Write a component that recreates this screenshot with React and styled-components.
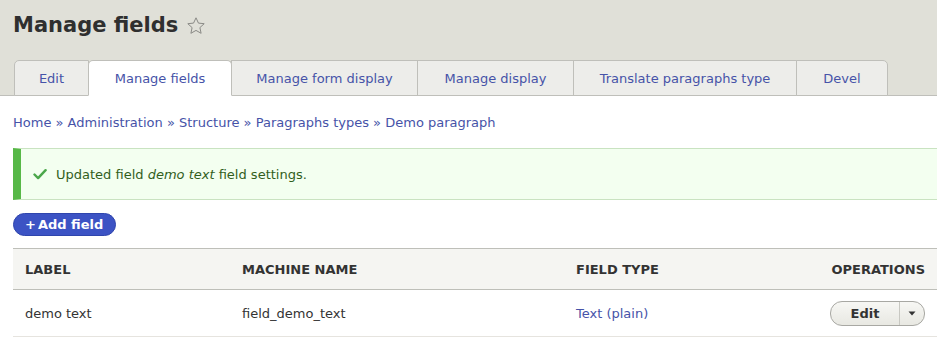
import React from "react";
import styled, { createGlobalStyle } from "styled-components";

const GlobalStyle = createGlobalStyle`
  html, body {
    margin: 0;
    padding: 0;
    background: #fff;
    font-family: "DejaVu Sans", Verdana, sans-serif;
    font-size: 13px;
    color: #333;
  }
  a { text-decoration: none; }
`;

const tabs = [
  { label: "Edit", w: 75 },
  { label: "Manage fields", w: 144 },
  { label: "Manage form display", w: 187 },
  { label: "Manage display", w: 157 },
  { label: "Translate paragraphs type", w: 224 },
  { label: "Devel", w: 92 },
];

const crumbs = [
  "Home",
  "Administration",
  "Structure",
  "Paragraphs types",
  "Demo paragraph",
];

export default function App() {
  return (
    <Page>
      <GlobalStyle />
      <Header>
        <TitleRow>
          <Title>Manage fields</Title>
          <Star viewBox="0 0 20 20">
            <path
              d="M10 1.8l2.45 5.3 5.75.6-4.3 3.9 1.2 5.7L10 14.4l-5.1 2.9 1.2-5.7-4.3-3.9 5.75-.6z"
              fill="none"
              stroke="#8a8a86"
              strokeWidth="1"
              strokeLinejoin="round"
            />
          </Star>
        </TitleRow>
        <Tabs>
          {tabs.map((t, i) => (
            <Tab
              key={t.label}
              $w={t.w}
              $active={i === 1}
              $first={i === 0}
              $last={i === tabs.length - 1}
            >
              {t.label}
            </Tab>
          ))}
        </Tabs>
      </Header>
      <Content>
        <Breadcrumb>
          {crumbs.map((c, i) => (
            <React.Fragment key={c}>
              {i > 0 && <Sep> » </Sep>}
              <Link href="#">{c}</Link>
            </React.Fragment>
          ))}
        </Breadcrumb>
        <Message>
          <Check viewBox="0 0 14 12">
            <path
              d="M1.5 6.5l3.6 3.6L12.6 2.2"
              fill="none"
              stroke="#4aa74a"
              strokeWidth="2.4"
              strokeLinecap="round"
              strokeLinejoin="round"
            />
          </Check>
          <span>
            Updated field <em>demo text</em> field settings.
          </span>
        </Message>
        <AddButton>
          <Plus>+</Plus>Add field
        </AddButton>
        <Table>
          <thead>
            <tr>
              <Th $w="193px">Label</Th>
              <Th $w="310px">Machine name</Th>
              <Th>Field type</Th>
              <Th $right>Operations</Th>
            </tr>
          </thead>
          <tbody>
            <tr>
              <Td>demo text</Td>
              <Td>field_demo_text</Td>
              <Td>
                <Link href="#">Text (plain)</Link>
              </Td>
              <Td $right>
                <DropButton>
                  <DropMain>Edit</DropMain>
                  <DropToggle>
                    <Caret viewBox="0 0 8 5">
                      <path d="M0.5 0.5h7L4 4.5z" fill="#333" />
                    </Caret>
                  </DropToggle>
                </DropButton>
              </Td>
            </tr>
          </tbody>
        </Table>
      </Content>
    </Page>
  );
}

const Page = styled.div`
  width: 937px;
  overflow: hidden;
`;

const Header = styled.header`
  background: #e0e0d8;
  padding: 0 0 0 13px;
  border-bottom: 1px solid #bfbfba;
`;

const TitleRow = styled.div`
  display: flex;
  align-items: center;
  height: 51px;
`;

const Title = styled.h1`
  margin: 0;
  font-size: 21px;
  font-weight: bold;
  color: #2f2f2f;
  line-height: 1;
`;

const Star = styled.svg`
  width: 20px;
  height: 20px;
  margin-left: 8px;
`;

const Tabs = styled.ul`
  display: flex;
  margin: 9px 0 -1px 1px;
  padding: 0;
  list-style: none;
`;

const Tab = styled.li`
  box-sizing: border-box;
  width: ${(p) => p.$w}px;
  height: 36px;
  display: flex;
  align-items: center;
  justify-content: center;
  margin-left: -1px;
  border: 1px solid #bfbfba;
  border-bottom: ${(p) => (p.$active ? "1px solid #fff" : "1px solid #bfbfba")};
  background: ${(p) => (p.$active ? "#fff" : "#ededea")};
  color: #4653a8;
  font-size: 13px;
  white-space: nowrap;
  border-radius: ${(p) =>
    p.$active ? "5px 5px 0 0" : p.$first ? "5px 0 0 0" : p.$last ? "0 5px 0 0" : "0"};
  position: relative;
  z-index: ${(p) => (p.$active ? 1 : 0)};
  &:first-child {
    margin-left: 0;
  }
`;

const Content = styled.main`
  padding: 0 0 0 13px;
`;

const Breadcrumb = styled.nav`
  margin-top: 19px;
  line-height: 16px;
  color: #4653a8;
`;

const Sep = styled.span`
  color: #4653a8;
`;

const Link = styled.a`
  color: #4653a8;
`;

const Message = styled.div`
  margin-top: 17px;
  display: flex;
  align-items: center;
  gap: 9px;
  padding-left: 12px;
  background: #f3fff0;
  border: 1px solid #c9e3c1;
  border-left: 8px solid #57b847;
  color: #325e1c;
  width: 1000px;
  box-sizing: border-box;
  height: 52px;

  em {
    font-style: italic;
  }
`;

const Check = styled.svg`
  width: 14px;
  height: 12px;
`;

const AddButton = styled.button`
  display: flex;
  align-items: center;
  margin-top: 13px;
  height: 23px;
  padding: 0 12px 0 11px;
  border: 1px solid #2f45ad;
  border-radius: 12px;
  background: #3c53c4;
  color: #fff;
  font-family: "DejaVu Sans", Verdana, sans-serif;
  font-weight: bold;
  font-size: 13px;
  line-height: 20px;
`;

const Plus = styled.span`
  margin-right: 2px;
`;

const Table = styled.table`
  margin-top: 12px;
  width: 924px;
  border-collapse: collapse;
`;

const Th = styled.th`
  width: ${(p) => p.$w || "auto"};
  height: 40px;
  padding: 0 12px;
  background: #f5f5f2;
  border-top: 1px solid #bebfb9;
  border-bottom: 1px solid #bebfb9;
  text-align: ${(p) => (p.$right ? "right" : "left")};
  text-transform: uppercase;
  font-weight: bold;
  font-size: 13px;
  color: #333;
`;

const Td = styled.td`
  height: 46px;
  padding: 0 12px;
  border-bottom: 1px solid #e6e4df;
  text-align: ${(p) => (p.$right ? "right" : "left")};
  color: #333;
`;

const DropButton = styled.div`
  display: inline-flex;
  height: 23px;
  border: 1px solid #a8a8a3;
  border-radius: 12px;
  background: linear-gradient(#f7f7f4, #e8e8e2);
  overflow: hidden;
  vertical-align: middle;
`;

const DropMain = styled.span`
  width: 68px;
  display: flex;
  align-items: center;
  justify-content: center;
  font-weight: bold;
  color: #333;
`;

const DropToggle = styled.span`
  width: 24px;
  display: flex;
  align-items: center;
  justify-content: center;
  border-left: 1px solid #c8c8c2;
`;

const Caret = styled.svg`
  width: 8px;
  height: 5px;
`;
